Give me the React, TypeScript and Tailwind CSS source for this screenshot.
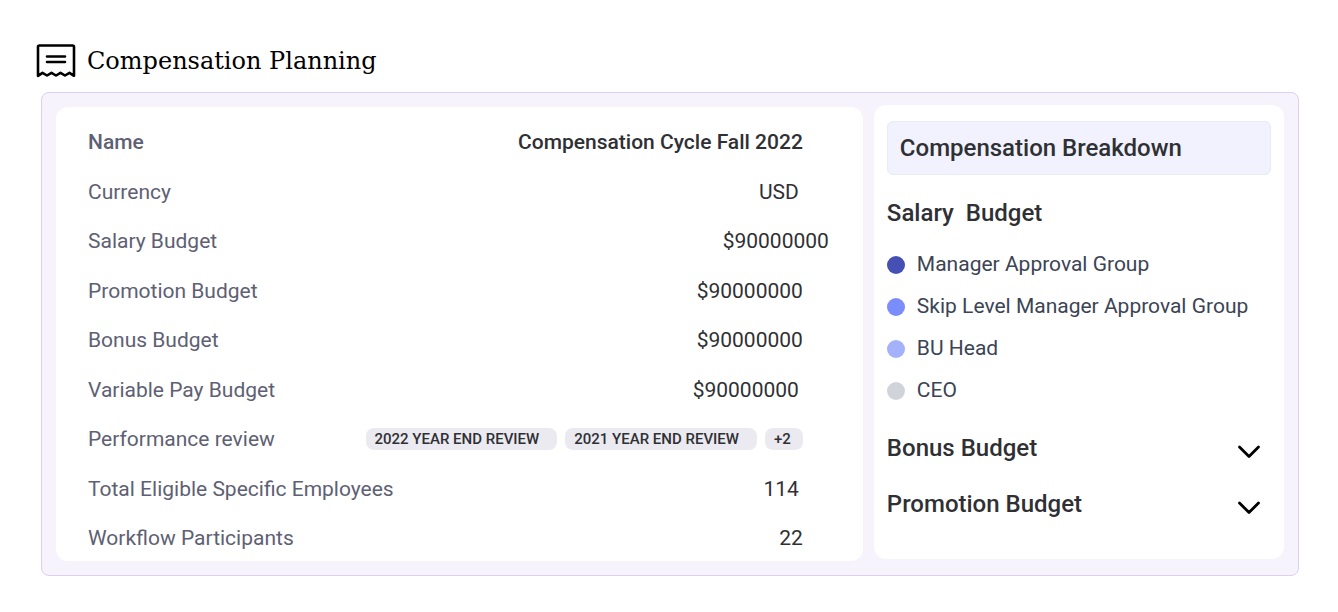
import { useState } from 'react'
import type { ReactNode } from 'react'
import { clsx } from 'clsx'

type Detail = {
  label: string
  value: ReactNode
  strong?: boolean
  inset: string
}

const reviews = ['2022 YEAR END REVIEW', '2021 YEAR END REVIEW']

const groups = [
  { name: 'Manager Approval Group', dot: 'bg-[#4550b5]' },
  { name: 'Skip Level Manager Approval Group', dot: 'bg-[#7b8cfb]' },
  { name: 'BU Head', dot: 'bg-[#a4b2fb]' },
  { name: 'CEO', dot: 'bg-[#d0d4da]' },
]

function ReviewTags() {
  return (
    <span className="flex items-center gap-2 text-[15px] font-medium">
      {reviews.map((review) => (
        <span key={review} className="rounded-lg bg-[#ebeaf0] pl-[9px] pr-[18px] leading-[22px]">
          {review}
        </span>
      ))}
      <span className="rounded-lg bg-[#ebeaf0] pl-[9px] pr-3 leading-[22px]">+2</span>
    </span>
  )
}

const details: Detail[] = [
  { label: 'Name', value: 'Compensation Cycle Fall 2022', strong: true, inset: 'pr-15' },
  { label: 'Currency', value: 'USD', inset: 'pr-16' },
  { label: 'Salary Budget', value: '$90000000', inset: 'pr-[34px]' },
  { label: 'Promotion Budget', value: '$90000000', inset: 'pr-15' },
  { label: 'Bonus Budget', value: '$90000000', inset: 'pr-15' },
  { label: 'Variable Pay Budget', value: '$90000000', inset: 'pr-16' },
  { label: 'Performance review', value: <ReviewTags />, inset: 'pr-15' },
  { label: 'Total Eligible Specific Employees', value: '114', inset: 'pr-16' },
  { label: 'Workflow Participants', value: '22', inset: 'pr-15' },
]

function ReceiptIcon() {
  return (
    <svg width="40" height="34" viewBox="0 0 40 34" fill="none" stroke="#000" strokeLinejoin="round" strokeLinecap="round" aria-hidden="true">
      <path
        d="M2 31.800V3a1.500 1.500 0 0 1 1.500-1.500h33a1.500 1.500 0 0 1 1.500 1.500v28.800l-4.500-3-4.500 2.700-4.500-2.700-4.500 2.700-4.500-2.700-4.500 2.700-4.500-2.700z"
        strokeWidth="2.600"
      />
      <path d="M11 12.500h18M11 18h18" strokeWidth="2.600" />
    </svg>
  )
}

function Chevron({ open }: { open: boolean }) {
  return (
    <svg
      width="24"
      height="16"
      viewBox="0 0 24 16"
      fill="none"
      stroke="#000"
      strokeWidth="2.800"
      strokeLinecap="round"
      strokeLinejoin="round"
      className={clsx('mt-2', open && 'rotate-180')}
      aria-hidden="true"
    >
      <path d="M2.500 3 12 12.500 21.500 3" />
    </svg>
  )
}

function GroupList() {
  return (
    <ul className="flex flex-col gap-3.5">
      {groups.map((group) => (
        <li key={group.name} className="flex items-center gap-3 text-[21px] leading-7 text-[#3b4454]">
          <span className={clsx('mt-0.5 size-[18px] shrink-0 rounded-full', group.dot)} />
          {group.name}
        </li>
      ))}
    </ul>
  )
}

function BudgetSection({ title }: { title: string }) {
  const [open, setOpen] = useState(false)

  return (
    <section>
      <h3>
        <button
          type="button"
          aria-expanded={open}
          onClick={() => setOpen(!open)}
          className="flex w-full items-center justify-between pr-2.5 text-left text-2xl font-medium"
        >
          {title}
          <Chevron open={open} />
        </button>
      </h3>
      {open && (
        <div className="pt-6">
          <GroupList />
        </div>
      )}
    </section>
  )
}

export default function App() {
  return (
    <main className="min-h-screen bg-white pl-[41px] pr-[39px] pt-[43px] pb-9 font-['Roboto',sans-serif] text-[#2f3034]">
      <header className="-ml-[5px] mb-[13px] flex items-center gap-[11px]">
        <ReceiptIcon />
        <h1 className="font-['DejaVu_Serif',serif] text-2xl leading-9 text-black">
          Compensation Planning
        </h1>
      </header>

      <div className="flex gap-[11px] rounded-lg border border-[#dccff0] bg-[#f6f3fd] px-3.5 pt-3 pb-3.5">
        <dl className="mt-0.5 flex flex-1 flex-col justify-between rounded-xl bg-white pt-[21px] pb-[9px] pl-8 text-[21px] leading-7">
          {details.map((row) => (
            <div key={row.label} className={clsx('flex items-center justify-between', row.strong && 'font-medium', row.inset)}>
              <dt className="text-[#5e6073]">{row.label}</dt>
              <dd>{row.value}</dd>
            </div>
          ))}
        </dl>

        <aside className="mb-0.5 w-[33.4%] rounded-xl bg-white px-[13px] pt-4 pb-[39px]">
          <h2 className="rounded-md border border-[#e9e9f8] bg-[#f2f2fe] px-3 py-2.5 text-2xl font-medium">
            Compensation Breakdown
          </h2>
          <section className="pt-[22px] pb-7">
            <h3 className="mb-[21px] whitespace-pre text-2xl font-medium">{'Salary  Budget'}</h3>
            <GroupList />
          </section>
          <div className="flex flex-col gap-6">
            <BudgetSection title="Bonus Budget" />
            <BudgetSection title="Promotion Budget" />
          </div>
        </aside>
      </div>
    </main>
  )
}
